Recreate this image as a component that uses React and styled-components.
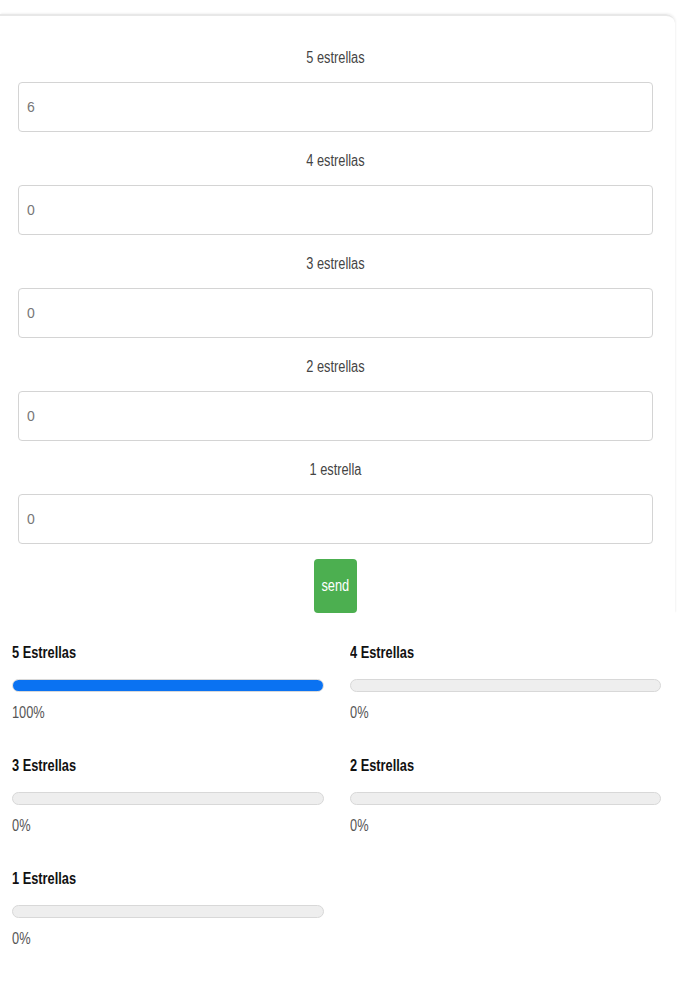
import React, { useState } from "react";
import styled, { createGlobalStyle } from "styled-components";

const GlobalStyle = createGlobalStyle`
  body {
    margin: 0;
    background: #fff;
    font-family: "Liberation Sans", Arial, sans-serif;
  }
`;

const fields = [
  { label: "5 estrellas", value: "6" },
  { label: "4 estrellas", value: "0" },
  { label: "3 estrellas", value: "0" },
  { label: "2 estrellas", value: "0" },
  { label: "1 estrella", value: "0" },
];

const results = [
  { title: "5 Estrellas", pct: 100 },
  { title: "4 Estrellas", pct: 0 },
  { title: "3 Estrellas", pct: 0 },
  { title: "2 Estrellas", pct: 0 },
  { title: "1 Estrellas", pct: 0 },
];

const App = () => {
  const [values, setValues] = useState(fields.map((f) => f.value));

  return (
    <Page>
      <GlobalStyle />
      <Card>
        <FieldList>
          {fields.map((field, index) => (
            <Field key={index}>
              <Label>
                <Narrow $origin="center">{field.label}</Narrow>
              </Label>
              <Input
                value={values[index]}
                onChange={(e) => {
                  const next = [...values];
                  next[index] = e.target.value;
                  setValues(next);
                }}
              />
            </Field>
          ))}
        </FieldList>
        <ButtonRow>
          <SendButton>
            <Narrow $origin="center">send</Narrow>
          </SendButton>
        </ButtonRow>
      </Card>

      <Results>
        {results.map((item, index) => (
          <Result key={index}>
            <Title>
              <Narrow>{item.title}</Narrow>
            </Title>
            <Track>
              <Fill style={{ width: item.pct + "%" }} />
            </Track>
            <Percent>
              <Narrow>{item.pct}%</Narrow>
            </Percent>
          </Result>
        ))}
      </Results>
    </Page>
  );
};

const Page = styled.div`
  padding-top: 14px;
  padding-bottom: 40px;
`;

const Card = styled.div`
  margin-right: 2px;
  padding: 32px 22px 0 18px;
  border-top: 2px solid #e8e8e8;
  border-top-right-radius: 9px;
  box-shadow: 1px -1px 2px rgba(0, 0, 0, 0.05);
`;

const FieldList = styled.div`
  display: flex;
  flex-direction: column;
  gap: 19px;
`;

const Field = styled.div`
  display: flex;
  flex-direction: column;
`;

const Label = styled.div`
  text-align: center;
  font-size: 16px;
  line-height: 20px;
  color: #444;
  margin-bottom: 14px;
`;

const Narrow = styled.span`
  display: inline-block;
  transform: scaleX(0.8);
  transform-origin: ${(props) => props.$origin || "left"};
  white-space: nowrap;
`;

const Input = styled.input`
  box-sizing: border-box;
  width: 100%;
  height: 50px;
  padding: 0 8px;
  border: 1px solid #d4d4d4;
  border-radius: 4px;
  font-family: "Liberation Sans", Arial, sans-serif;
  font-size: 14px;
  color: #777;
  outline: none;
  &:focus {
    border-color: #bbb;
  }
`;

const ButtonRow = styled.div`
  display: flex;
  justify-content: center;
  margin-top: 15px;
  margin-left: -1px;
`;

const SendButton = styled.button`
  width: 43px;
  height: 54px;
  padding: 0;
  border: none;
  border-radius: 4px;
  background: #4caf50;
  color: #fff;
  font-family: "Liberation Sans", Arial, sans-serif;
  font-size: 16px;
  cursor: pointer;
`;

const Results = styled.div`
  display: grid;
  grid-template-columns: 1fr 1fr;
  column-gap: 26px;
  row-gap: 33px;
  padding: 30px 16px 0 12px;
`;

const Result = styled.div`
  display: flex;
  flex-direction: column;
`;

const Title = styled.div`
  font-size: 16px;
  font-weight: bold;
  line-height: 20px;
  color: #111;
  margin-bottom: 16px;
`;

const Track = styled.div`
  box-sizing: border-box;
  height: 13px;
  border: 1px solid #d8d8d8;
  border-radius: 7px;
  background: #eee;
  overflow: hidden;
  margin-bottom: 11px;
`;

const Fill = styled.div`
  height: 100%;
  background: #0a72f2;
`;

const Percent = styled.div`
  font-size: 16px;
  line-height: 20px;
  color: #555;
`;

export default App;
